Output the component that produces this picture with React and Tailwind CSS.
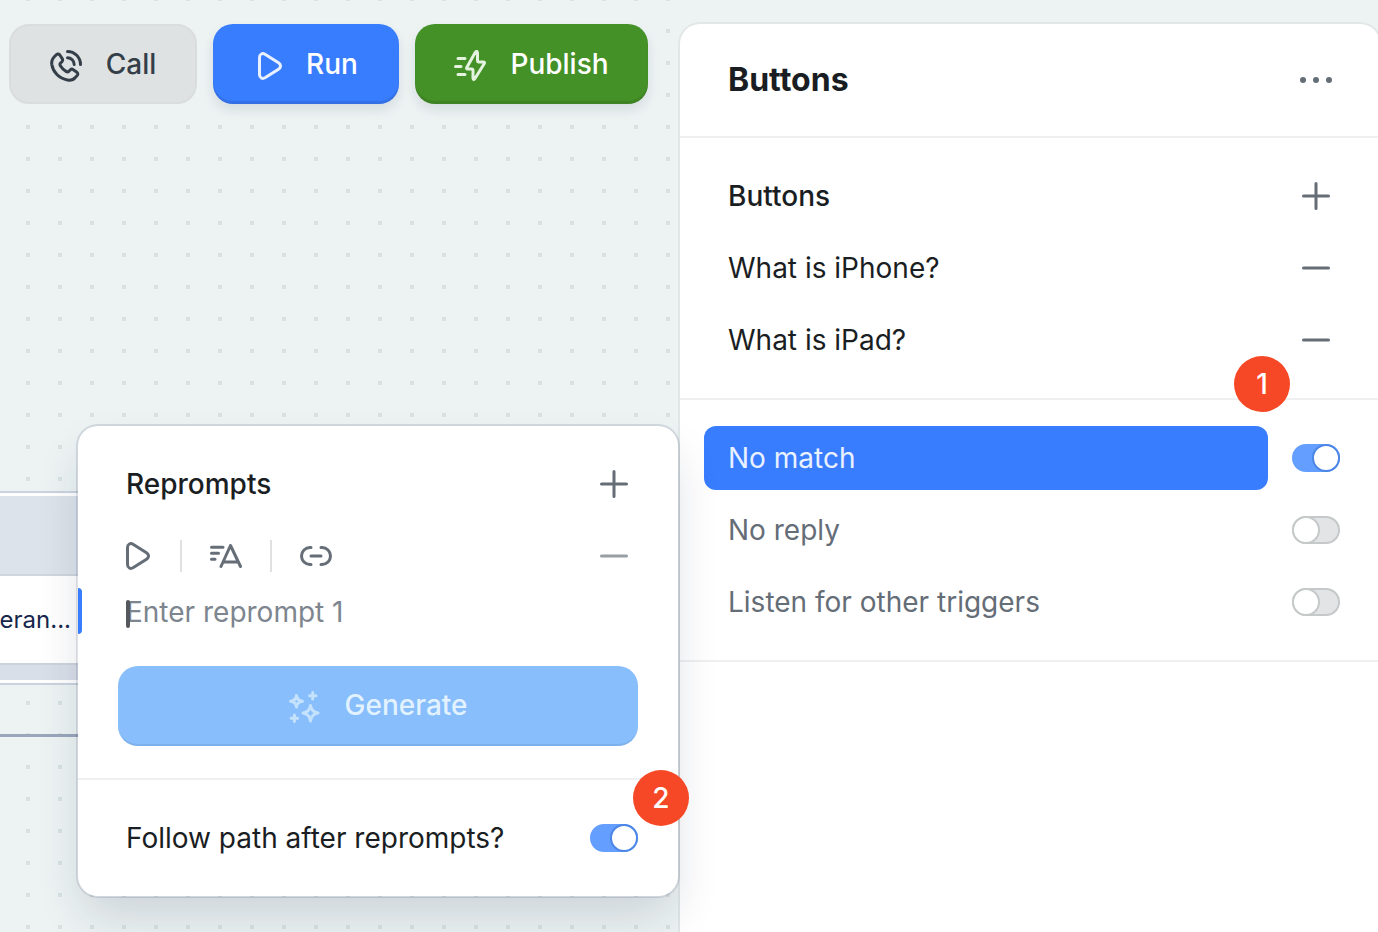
import { useState } from 'react';

const BUTTONS = ['What is iPhone?', 'What is iPad?'];

const svgProps = { fill: 'none', stroke: 'currentColor', strokeWidth: 3, strokeLinecap: 'round', strokeLinejoin: 'round' };

function CallIcon() {
  return (
    <svg className="mt-1 w-8 h-8" viewBox="0 0 32 32" {...svgProps}>
      <path d="M4.5 6.5 6.5 4.6C7.5 3.7 9 3.9 9.8 5l2.4 3.6c.6 1 .5 2.2-.3 3.1L10.6 13c-.7.8-.8 1.9-.2 2.8 1.4 2.4 3.3 4.2 5.6 5.6 1 .6 2.2.5 3-.3l1.3-1.2c.8-.8 2.1-.9 3-.2l3.6 2.5c1.1.8 1.2 2.3.3 3.3l-1.9 2c-1.8 2.3-4.8 3-7.8 2.5C9 28.5 3 22 1.8 14.5c-.4-3 .5-5.9 2.7-8Z" />
      <path d="M17.5 1.5A13 13 0 0 1 30.5 14.5M17.5 7.8A6.7 6.7 0 0 1 24.2 14.5" />
    </svg>
  );
}

function PlayIcon({ className = '' }) {
  return (
    <svg className={`w-6 h-7 ${className}`} viewBox="0 0 24 28" {...svgProps}>
      <path d="M1.5 5.5C1.5 2 4.5.8 7 2.2l13.5 8.6c2.7 1.8 2.7 4.6 0 6.4L7 25.8c-2.5 1.4-5.5.2-5.5-3.3Z" />
    </svg>
  );
}

function PublishIcon() {
  return (
    <svg className="mt-1 w-8 h-8 text-[#e4f3df]" viewBox="0 0 32 32" {...svgProps}>
      <path d="M4 8.5h7M1.5 16.5H7M4 24.5h7" />
      <path d="M21.2 2.6 12.8 17.5Q12 19 13.8 19h3.7Q19 19 19 20.5V28Q19.3 31 21 28.5l9.3-15Q31 12 29.3 12H25q-1.5 0-1.5-1.5V3Q23-.2 21.2 2.6Z" />
    </svg>
  );
}

function TextIcon() {
  return (
    <svg className="w-8 h-6" viewBox="0 0 32 24" {...svgProps}>
      <path d="M1.5 3.3H13M1.5 9.3H8.5M1.5 15.3H5" />
      <path d="M11 22.5 20.5 1.5 30.5 22.5M13.5 18H28" />
    </svg>
  );
}

function LinkIcon() {
  return (
    <svg className="w-8 h-5" viewBox="0 0 32 20" {...svgProps}>
      <path d="M11 1.5H10a8.5 8.5 0 0 0 0 17h1M21 1.5h1a8.5 8.5 0 0 1 0 17h-1M11 10h10" />
    </svg>
  );
}

function SparklesIcon() {
  return (
    <svg className="mt-1 w-8 h-8 text-[#c5e2fd]" viewBox="0 0 32 32" {...svgProps}>
      <path d="M21.5 14.5Q22.5 21 29 22 22.5 23 21.5 30 20.5 23 14 22 20.5 21 21.5 14.5Z" />
      <path d="M7.5 4.5Q8 9.5 13.5 10.3 8 11 7.5 16 7 11 1.5 10.3 7 9.5 7.5 4.5Z" />
      <path d="M23.7 1.5V8M20.5 4.7H27M5.4 24v6.5M2.1 27.2h6.5" />
    </svg>
  );
}

function PlusIcon() {
  return (
    <svg className="w-7 h-7" viewBox="0 0 28 28" {...svgProps}>
      <path d="M14 1.5v25M1.5 14h25" />
    </svg>
  );
}

function MinusIcon() {
  return (
    <svg className="w-7 h-7" viewBox="0 0 28 28" {...svgProps}>
      <path d="M1.5 14h25" />
    </svg>
  );
}

function Toggle({ id, checked, onChange }) {
  return (
    <input
      id={id}
      type="checkbox"
      role="switch"
      checked={checked}
      onChange={(e) => onChange(e.target.checked)}
      className="relative shrink-0 w-12 h-7 appearance-none rounded-full cursor-pointer border-2 border-[#c5c9c9] bg-[#e2e4e6] before:absolute before:-top-0.5 before:-left-0.5 before:w-7 before:h-7 before:rounded-full before:border-2 before:border-[#c5c9c9] before:bg-white checked:border-[#649fff] checked:bg-[#649fff] checked:before:left-[18px] checked:before:border-[#4c86e6]"
    />
  );
}

function Badge({ children, className }) {
  return (
    <span className={`absolute z-10 flex w-14 h-14 items-center justify-center rounded-full bg-[#f64826] text-[28px] font-medium text-white ${className}`}>
      {children}
    </span>
  );
}

function Reprompts() {
  const [follow, setFollow] = useState(true);
  const [text, setText] = useState('');

  return (
    <section className="absolute top-[400px] right-full w-[604px] rounded-[22px] border-2 border-[#13214420] bg-white bg-clip-padding shadow-[0_24px_48px_-8px_rgba(19,33,68,0.16)]">
      <div className="px-10 pt-[22px] pb-8">
        <div className="flex h-18 items-center justify-between pl-2 pr-2.5">
          <h2 className="font-medium">Reprompts</h2>
          <button aria-label="Add reprompt" className="text-[#656d77]"><PlusIcon /></button>
        </div>
        <div className="flex h-18 items-center pl-2 pr-2.5 text-[#656d77]">
          <button aria-label="Preview"><PlayIcon /></button>
          <span className="ml-[30px] h-8 w-0.5 bg-[#dfe1e3]" />
          <button aria-label="Text style" className="mx-7"><TextIcon /></button>
          <span className="h-8 w-0.5 bg-[#dfe1e3]" />
          <button aria-label="Link" className="ml-7"><LinkIcon /></button>
          <button aria-label="Remove reprompt" className="ml-auto text-[#979ea4]"><MinusIcon /></button>
        </div>
        <div className="relative mb-8 h-[42px]">
          <span className="absolute -left-10 -top-1 h-[46px] w-1 rounded-r bg-[#397dff]" />
          <span className="absolute left-2 top-2 h-7 w-1 rounded-sm bg-[#55585c]" />
          <input
            aria-label="Reprompt 1"
            value={text}
            onChange={(e) => setText(e.target.value)}
            placeholder="Enter reprompt 1"
            className="h-10 w-full pl-2 outline-none placeholder:text-[#7d858e]"
          />
        </div>
        <button className="flex h-20 w-full items-center justify-center gap-6 rounded-[20px] border-b-2 border-[#7db1ec] bg-[#87befb] font-medium text-[#e3f2ff]">
          <SparklesIcon />
          Generate
        </button>
      </div>
      <div className="flex h-[118px] items-center justify-between border-t-2 border-[#eff0f1] pl-12 pr-10">
        <label htmlFor="follow">Follow path after reprompts?</label>
        <Toggle id="follow" checked={follow} onChange={setFollow} />
      </div>
      <Badge className="bottom-[70px] -right-[11px]">2</Badge>
    </section>
  );
}

export default function App() {
  const [triggers, setTriggers] = useState({ match: true, reply: false, other: false });
  const set = (key) => (value) => setTriggers({ ...triggers, [key]: value });

  return (
    <div className="flex min-h-screen overflow-hidden bg-[#edf3f3] font-['Inter',sans-serif] text-[28px] leading-9 text-[#1a1e23]">
      {/* Canvas */}
      <main className="relative flex-1">
        <svg className="absolute inset-0 h-full w-full" aria-hidden="true">
          <pattern id="dots" x="26" y="29" width="32" height="32" patternUnits="userSpaceOnUse">
            <rect width="4" height="4" fill="#d9e2e1" />
          </pattern>
          <rect width="100%" height="100%" fill="url(#dots)" />
        </svg>

        {/* Toolbar */}
        <div className="relative flex justify-end pt-6 pr-[30px]">
          <div className="flex gap-4 bg-[#edf3f3] font-medium">
            <button className="flex h-20 w-[188px] items-center justify-center gap-6 rounded-[20px] border-2 border-[#d9dddd] bg-[#dee2e2] text-[#343e49]">
              <CallIcon />
              Call
            </button>
            <button className="flex h-20 w-[186px] items-center justify-center gap-6 rounded-[20px] bg-[#397dff] pl-1 text-white shadow-[inset_0_-3px_1px_rgba(0,0,0,0.1),0_6px_12px_rgba(19,33,68,0.1)]">
              <PlayIcon className="mt-1 text-[#e9f1ff]" />
              Run
            </button>
            <button className="flex h-20 w-[233px] items-center justify-center gap-6 rounded-[20px] bg-[#449127] text-white shadow-[inset_0_-3px_1px_rgba(0,0,0,0.1),0_6px_12px_rgba(19,33,68,0.1)]">
              <PublishIcon />
              Publish
            </button>
          </div>
        </div>

        {/* Block on the canvas */}
        <div className="absolute left-0 top-[491px] w-40 border-y-2 border-[#cbd3de] bg-white py-[3px] text-2xl text-[#16264c]">
          <div className="h-20 border-b-2 border-[#d0d6de] bg-[#dce3ea]" />
          <div className="flex h-[87px] w-[71px] items-center justify-end whitespace-nowrap">eran...</div>
          <div className="h-[17px] border-t-2 border-[#cdd3db] bg-[#d9dfe8]" />
        </div>
        <div className="absolute left-0 top-[734px] h-[3px] w-40 bg-[#9aa6ba]" />
      </main>

      {/* Editor panel */}
      <aside className="relative mt-[22px] -mr-1 w-[704px] shrink-0 rounded-t-[22px] border-2 border-b-0 border-[#e1e7e7] bg-white">
        <header className="flex h-28 items-center justify-between pl-12 pr-12">
          <h1 className="text-[32px] font-bold">Buttons</h1>
          <button aria-label="More" className="text-[#656d77]">
            <svg className="w-8 h-8" viewBox="0 0 32 32" fill="currentColor">
              <circle cx="3" cy="16" r="3" />
              <circle cx="16" cy="16" r="3" />
              <circle cx="29" cy="16" r="3" />
            </svg>
          </button>
        </header>

        <section className="border-t-2 border-[#eff0f1] py-[22px] pl-12 pr-[50px]">
          <div className="flex h-18 items-center justify-between">
            <h2 className="font-medium">Buttons</h2>
            <button aria-label="Add button" className="text-[#656d77]"><PlusIcon /></button>
          </div>
          {BUTTONS.map((label) => (
            <div key={label} className="flex h-18 items-center justify-between">
              <span>{label}</span>
              <button aria-label={`Remove ${label}`} className="text-[#656d77]"><MinusIcon /></button>
            </div>
          ))}
        </section>

        <section className="relative border-y-2 border-[#eff0f1] py-[22px] pl-6 pr-10 text-[#656d77]">
          <Badge className="-top-11 right-[90px]">1</Badge>
          <div className="flex h-18 items-center gap-6">
            <label htmlFor="no-match" className="flex h-16 flex-1 items-center rounded-xl bg-[#397dff] pl-6 text-[#e9f1ff]">No match</label>
            <Toggle id="no-match" checked={triggers.match} onChange={set('match')} />
          </div>
          <div className="flex h-18 items-center gap-6">
            <label htmlFor="no-reply" className="flex-1 pl-6">No reply</label>
            <Toggle id="no-reply" checked={triggers.reply} onChange={set('reply')} />
          </div>
          <div className="flex h-18 items-center gap-6">
            <label htmlFor="other" className="flex-1 pl-6">Listen for other triggers</label>
            <Toggle id="other" checked={triggers.other} onChange={set('other')} />
          </div>
        </section>

        <Reprompts />
      </aside>
    </div>
  );
}
